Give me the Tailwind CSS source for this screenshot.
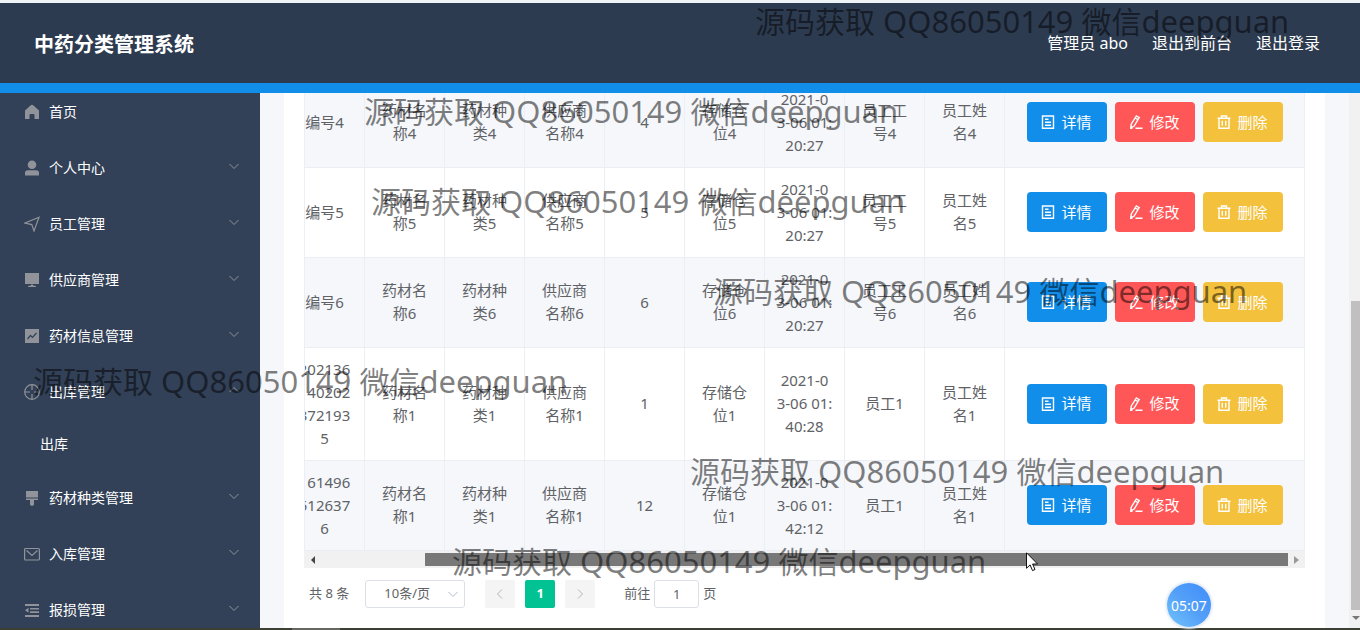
<!DOCTYPE html>
<html lang="zh-CN">
<head>
<meta charset="utf-8">
<meta name="viewport" content="width=device-width, initial-scale=1">
<title>中药分类管理系统</title>
<script src="https://cdn.jsdelivr.net/npm/@tailwindcss/browser@4"></script>
</head>
<body class="flex h-screen flex-col overflow-hidden border-t-3 border-[#eef3f8] bg-[#f5f7fa] font-['Noto_Sans','Noto_Sans_CJK_SC',sans-serif] text-[#606266]">

<svg class="hidden">
  <symbol id="chev" viewBox="0 0 12 12"><path d="M1.5 4L6 8.500 10.500 4" fill="none" stroke="currentColor"/></symbol>
  <symbol id="doc" viewBox="0 0 14 14"><path d="M1.5 1h11v12.200h-11zM4 4.3h3.5M4 7.2h6M4 10.2h6" fill="none" stroke="currentColor" stroke-width="1.400"/></symbol>
  <symbol id="pen" viewBox="0 0 14 14"><path d="M7.400 1L10.200 2.600 5.200 11 1.800 12.800 2.200 9.200zM6.200 3l2.800 1.600M1.500 13.200h2M6.500 13.200h7" fill="none" stroke="currentColor" stroke-width="1.400"/></symbol>
  <symbol id="bin" viewBox="0 0 14 14"><path d="M.5 3.2h13M4.5 3V1h5v2M2 3.2V13.200h10V3.2M5.3 5.8v5M8.7 5.8v5" fill="none" stroke="currentColor" stroke-width="1.400"/></symbol>
</svg>

<header class="flex h-[90px] shrink-0 items-center justify-between border-b-10 border-[#118eea] bg-[#2d3b50] pr-10 pl-[34px] text-white">
  <h1 class="pt-1 text-xl font-bold">中药分类管理系统</h1>
  <nav class="flex gap-6 text-base">
    <span>管理员 abo</span>
    <a href="#">退出到前台</a>
    <a href="#">退出登录</a>
  </nav>
</header>

<div class="flex min-h-0 flex-1 overflow-hidden">
  <aside class="w-[260px] shrink-0 overflow-hidden bg-[#324157] text-sm text-white">
    <ul id="menu" class="-mt-[9px]"></ul>
  </aside>

  <main class="mx-6 flex min-w-0 flex-1 flex-col overflow-hidden bg-white px-5">
    <div class="shrink-0 overflow-hidden border-l border-[#ebeef5]">
      <table class="-mt-[15px] -ml-[20px] w-[calc(100%+20px)] table-fixed border-separate border-spacing-0 text-center text-[15px] leading-[23px]">
        <colgroup>
          <col class="w-20"><col class="w-20"><col class="w-20"><col class="w-20"><col class="w-20"><col class="w-20"><col class="w-20"><col class="w-20"><col class="w-20"><col>
        </colgroup>
        <tbody id="rows"></tbody>
      </table>
    </div>
    <div class="flex h-[17px] shrink-0 items-center bg-[#f1f1f1]">
      <span class="ml-[7px] size-0 border-y-4 border-r-4 border-y-transparent border-r-[#444]"></span>
      <span class="ml-[110px] h-[13px] flex-1 bg-[#787878]"></span>
      <span class="mx-1.5 size-0 border-y-4 border-l-5 border-y-transparent border-l-[#999]"></span>
    </div>
    <div class="flex shrink-0 items-center pt-3 pl-[5px] text-[13px]">
      <span>共 8 条</span>
      <label class="relative ml-4">
        <select aria-label="每页条数" class="block h-7 w-[100px] appearance-none rounded-[3px] border border-[#dcdfe6] bg-white pr-4 text-center text-[13px]"><option>10条/页</option></select>
        <svg class="pointer-events-none absolute top-2 right-1.5 size-3 text-[#b4bccc]"><use href="#chev"/></svg>
      </label>
      <button aria-label="上一页" class="ml-5 grid h-7 w-[30px] place-items-center rounded-xs bg-[#f4f4f5] text-[#b0b3ba]"><svg class="size-3 rotate-90"><use href="#chev"/></svg></button>
      <button class="ml-2.5 h-7 w-[30px] rounded-xs bg-[#00c292] font-bold text-white">1</button>
      <button aria-label="下一页" class="ml-2.5 grid h-7 w-[30px] place-items-center rounded-xs bg-[#f4f4f5] text-[#b0b3ba]"><svg class="size-3 -rotate-90"><use href="#chev"/></svg></button>
      <label for="page" class="ml-[29px]">前往</label>
      <input id="page" value="1" class="mx-1 h-7 w-[45px] rounded-[3px] border border-[#dcdfe6] text-center">
      <span>页</span>
    </div>
  </main>

  <div class="flex w-[11px] shrink-0 flex-col items-end overflow-hidden bg-[#f1f1f1] pt-[208px] pb-2">
    <span class="w-[9px] flex-1 bg-[#c1bfbf]"></span>
    <span class="mt-1.5 h-0 border-x-4 border-t-4 border-x-transparent border-t-[#777]"></span>
  </div>
</div>
<footer class="flex h-0.5 shrink-0 bg-[#3c4034]"><span class="ml-[292px] w-12 bg-[#666860]"></span></footer>

<div id="marks" class="pointer-events-none text-[30px] leading-10 whitespace-nowrap text-black/50"></div>

<div class="absolute top-[583px] left-[1167px] grid size-11 place-items-center rounded-full bg-linear-to-bl from-[#3f8cfa] via-[#539ff8] to-[#74c4fb] text-[14px] text-white shadow-[0_0_2px_2px_#e8eef6]">05:07</div>
<svg class="absolute top-[552px] left-[1026px] h-5 w-3" viewBox="0 0 12 20"><path d="M.5 .8v15.5l3.6-3.4 2.4 5.7 2.5-1.1-2.4-5.5h5z" fill="#fff" stroke="#111"/></svg>

<script>
const icons = {
  home: '<path d="M8 .8q.8 0 1.500.6L15 6.500V15h-4.500v-4q0-1-1-1h-3q-1 0-1 1v4H1V6.500l5.500-5.100Q7.200.8 8 .8z" fill="currentColor"/>',
  user: '<circle cx="8" cy="4.8" r="4.300" fill="currentColor"/><path d="M1 15.500v-2.500q0-2.800 3-2.800h8q3 0 3 2.800v2.500z" fill="currentColor"/>',
  plane: '<path d="M15 1.200L1 7l6.800 1.600L10 15z" fill="none" stroke="currentColor" stroke-width="1.200"/>',
  monitor: '<path d="M1 1h14v11H1zM4 15v-1l3-.5v-1h2v1l3 .5v1z" fill="currentColor"/>',
  chart: '<path d="M1 1h14v14H1z" fill="currentColor"/><path d="M3.500 11l3-3.500 2 2L12.500 5" fill="none" stroke="#324157" stroke-width="1.200"/>',
  aim: '<g fill="none" stroke="currentColor" stroke-width="1.200"><circle cx="8" cy="8" r="7.300"/><path d="M8 1v5M8 10v5M1 8h5M10 8h5"/></g>',
  brush: '<path d="M2 1h12v6.500H2zM2 8.500h12v1.500h-4v5L8 16l-2-1v-5H2z" fill="currentColor"/>',
  mail: '<g fill="none" stroke="currentColor" stroke-width="1.200"><rect x=".6" y="2.500" width="14.800" height="11.500" rx="1"/><path d="M2.500 4.500L8 9.500l5.500-5"/></g>',
  list: '<path d="M1 2h14v2H1zM6 6h9v1.600H6zM6 9.300h9v1.600H6zM1 13h14v2H1zM1 8.300l3.500-2.500v5z" fill="currentColor"/>'
};
const menu = [['home','首页',0],['user','个人中心',1],['plane','员工管理',1],['monitor','供应商管理',1],['chart','药材信息管理',1],['aim','出库管理',2],[null,'出库'],['brush','药材种类管理',1],['mail','入库管理',1],['list','报损管理',1]];
document.getElementById('menu').innerHTML = menu.map(([icon, label, arrow]) => icon
  ? `<li><a href="#" class="flex h-14 items-center pr-5 pl-6"><svg class="mr-[9px] size-4 text-[#909399]" viewBox="0 0 16 16">${icons[icon]}</svg><span class="flex-1">${label}</span>${arrow ? `<svg class="mb-1 size-3 text-[#909399] ${arrow == 2 ? 'rotate-180' : ''}"><use href="#chev"/></svg>` : ''}</a></li>`
  : `<li><a href="#" class="flex h-[50px] items-center pb-0.5 pl-10">${label}</a></li>`).join('');

const item = (code, qty, time, no, k) => [code, `药材名<br>称${k}`, `药材种<br>类${k}`, `供应商<br>名称${k}`, qty, `存储仓<br>位${k}`, `2021-0<br>3-06 01:<br>${time}`, no, `员工姓<br>名${k}`];
const rows = [
  item('编号4', 4, '20:27', '员工工<br>号4', 4),
  item('编号5', 5, '20:27', '员工工<br>号5', 5),
  item('编号6', 6, '20:27', '员工工<br>号6', 6),
  item('202136<br>140202<br>372193<br>5', 1, '40:28', '员工1', 1),
  item('161496<br>512637<br>6', 12, '42:12', '员工1', 1)
];
const btn = (bg, icon, label) => `<button class="flex h-10 w-20 items-center justify-center gap-1.5 rounded ${bg} text-white"><svg class="size-3.5"><use href="#${icon}"/></svg>${label}</button>`;
document.getElementById('rows').innerHTML = rows.map((r, i) => `<tr class="h-[90px] ${i % 2 ? 'bg-white' : 'bg-[#f5f7fb]'}">` +
  r.map((c, j) => `<td class="border-r border-b border-[#ebeef5] pb-2.5 whitespace-nowrap ${j ? 'pt-[9px]' : 'pt-2.5'}">${c}</td>`).join('') +
  `<td class="border-r border-b border-[#ebeef5] pb-px"><div class="flex justify-center gap-2">${btn('bg-[#118eea]','doc','详情')}${btn('bg-[#ff5757]','pen','修改')}${btn('bg-[#f3c13c]','bin','删除')}</div></td></tr>`).join('');

document.getElementById('marks').innerHTML = [[755,1],[364,91],[371,181],[713,271],[33,361],[690,451],[452,541]]
  .map(([x, y]) => `<span class="absolute" style="left:${x}px;top:${y}px">源码获取<span class="text-[31px]"> QQ86050149 </span>微信<span class="text-[31px]">deepguan</span></span>`).join('');
</script>
</body>
</html>
